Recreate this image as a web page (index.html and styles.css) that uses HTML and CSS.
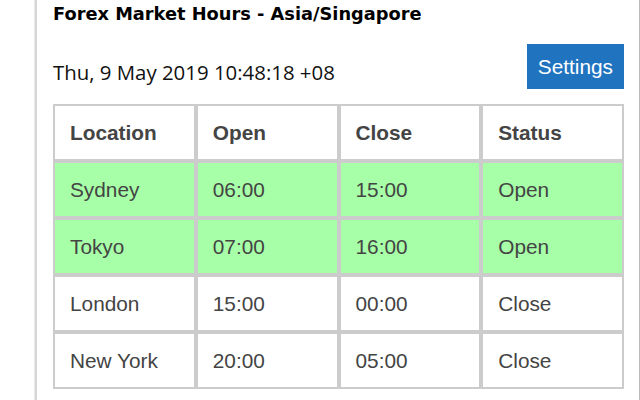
FILE: index.html
```html
<!DOCTYPE html>
<html lang="en">
<head>
    <meta charset="UTF-8">
    <meta name="viewport" content="width=device-width, initial-scale=1.0">
    <title>Forex Market Hours</title>
    <link rel="stylesheet" href="styles.css">
</head>
<body>
    <div class="panel">
        <h1 class="title">Forex Market Hours - Asia/Singapore</h1>

        <div class="top-row">
            <p id="fecha" class="date">Thu, 9 May 2019 10:48:18 +08</p>
            <button class="settings">Settings</button>
        </div>

        <table class="markets">
            <thead>
                <tr>
                    <th>Location</th>
                    <th>Open</th>
                    <th>Close</th>
                    <th>Status</th>
                </tr>
            </thead>
            <tbody>
                <tr class="open">
                    <td>Sydney</td>
                    <td>06:00</td>
                    <td>15:00</td>
                    <td>Open</td>
                </tr>
                <tr class="open">
                    <td>Tokyo</td>
                    <td>07:00</td>
                    <td>16:00</td>
                    <td>Open</td>
                </tr>
                <tr>
                    <td>London</td>
                    <td>15:00</td>
                    <td>00:00</td>
                    <td>Close</td>
                </tr>
                <tr>
                    <td>New York</td>
                    <td>20:00</td>
                    <td>05:00</td>
                    <td>Close</td>
                </tr>
            </tbody>
        </table>
    </div>
</body>
</html>
```

FILE: styles.css
```css
body {
    margin: 0;
    padding: 0;
    background-color: #fff;
    font-family: "Liberation Sans", Arial, sans-serif;
}
.panel {
    box-sizing: border-box;
    margin-left: 35px;
    min-height: 100vh;
    padding: 3px 15px 0 16px;
    border-left: 2px solid #d6d6d6;
    border-right: 1px solid #bbb;
    box-shadow: -1px 0 1px #ececec;
}
.title {
    margin: 0;
    font-family: "DejaVu Sans", Verdana, sans-serif;
    font-size: 17.8px;
    font-weight: bold;
    color: #000;
}
.top-row {
    display: flex;
    justify-content: space-between;
    align-items: flex-end;
    margin-top: 20px;
}
.date {
    margin: 0 0 3px 0;
    font-family: "Open Sans", sans-serif;
    font-size: 20.4px;
    color: #111;
}
.settings {
    padding: 10px 11px;
    border: none;
    background-color: #1f73bf;
    color: #fff;
    font-family: "Liberation Sans", Arial, sans-serif;
    font-size: 20.8px;
    line-height: 25px;
    cursor: pointer;
}
.markets {
    width: 100%;
    margin-top: 15px;
    table-layout: fixed;
    border-collapse: separate;
    border-spacing: 0;
    color: #444;
    font-size: 20.8px;
}
.markets th,
.markets td {
    padding: 15px;
    line-height: 23px;
    text-align: left;
    border: 2px solid #ccc;
}
.markets tr.open {
    background-color: #a7ffa7;
}
```
